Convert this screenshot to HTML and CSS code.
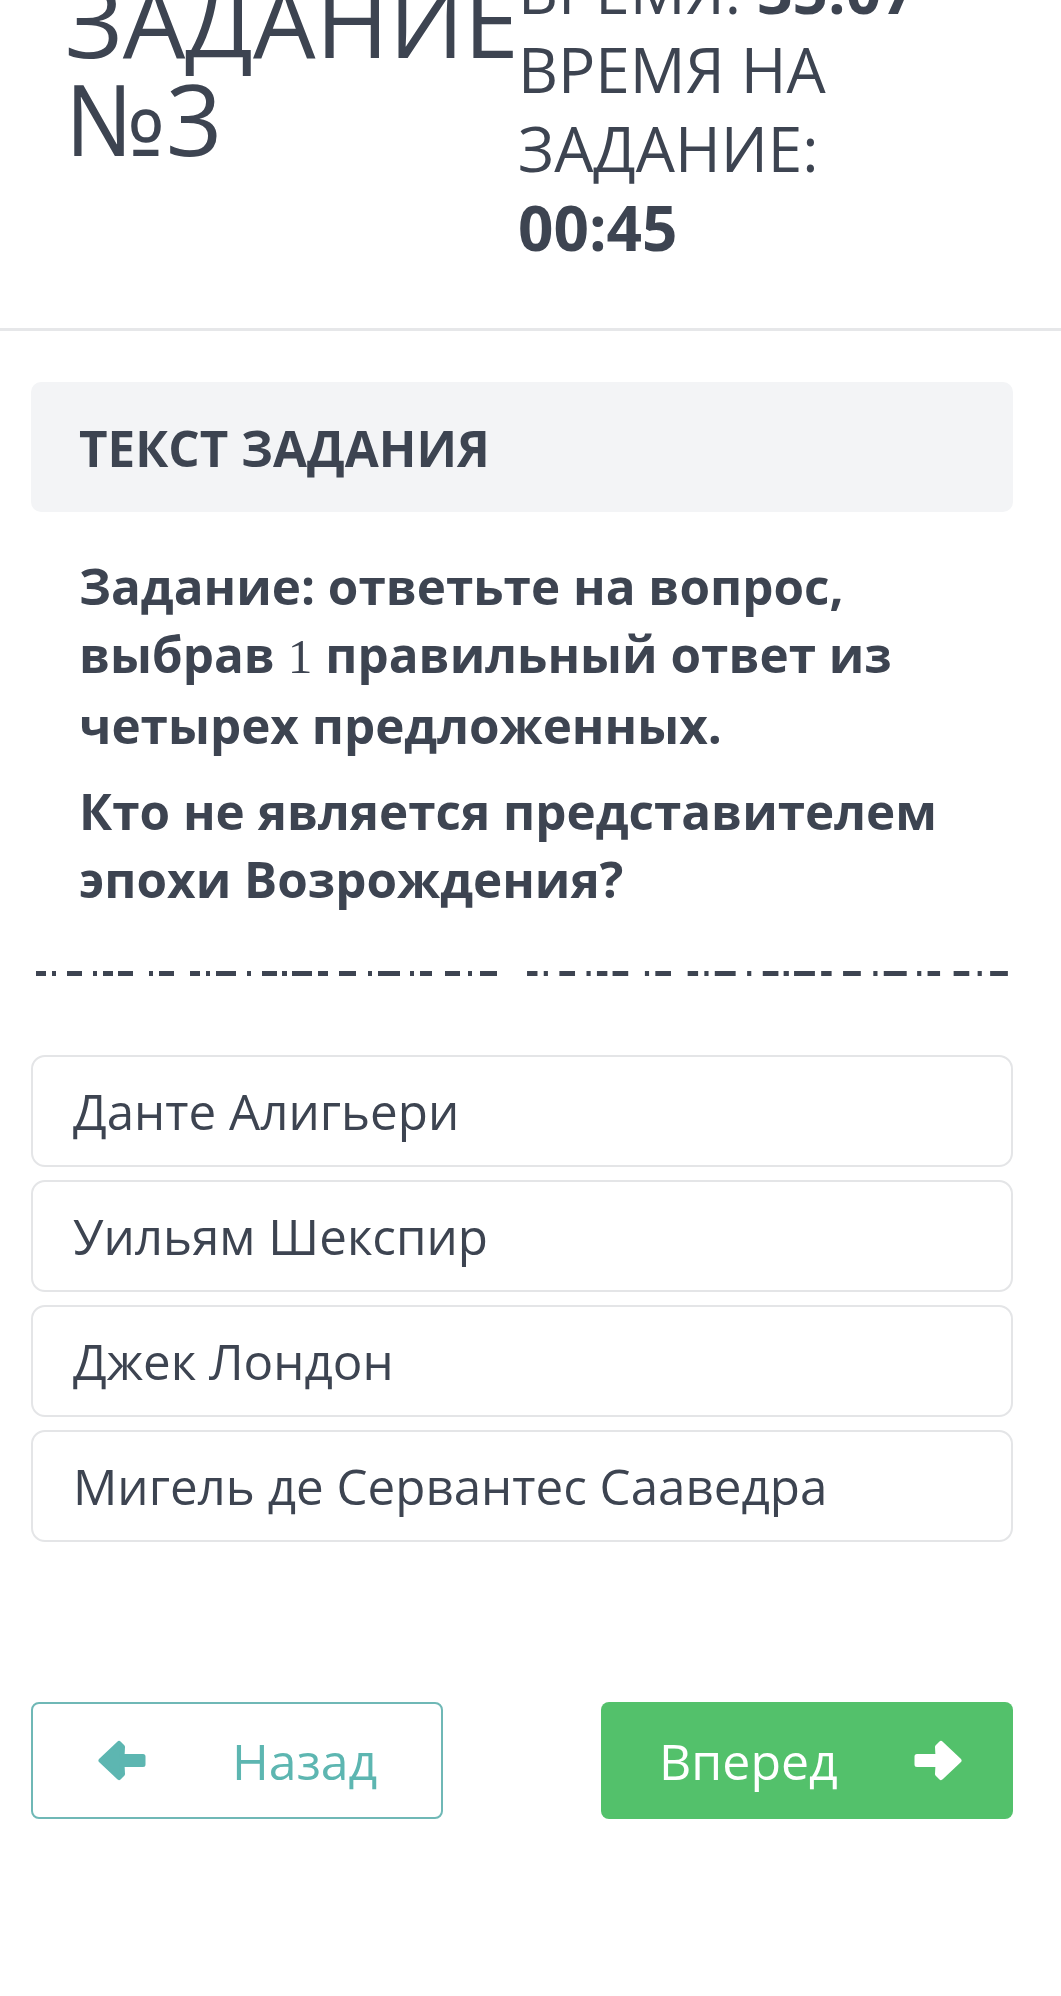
FILE: index.html
```html
<!DOCTYPE html>
<html lang="ru">
<head>
<meta charset="utf-8">
<title>Задание №3</title>
<link rel="stylesheet" href="styles.css">
</head>
<body>
<div class="page">
  <header class="top">
    <h1 class="title">ЗАДАНИЕ №3</h1>
    <div class="timers">
      <div>ВРЕМЯ: <b>35:07</b></div>
      <div>ВРЕМЯ НА ЗАДАНИЕ: <b>00:45</b></div>
    </div>
  </header>
  <main class="content">
    <div class="section-head">ТЕКСТ ЗАДАНИЯ</div>
    <div class="question">
      <p>Задание: ответьте на вопрос, выбрав <span class="num">1</span> правильный ответ из четырех предложенных.</p>
      <p>Кто не является представителем эпохи Возрождения?</p>
    </div>
    <svg class="dashes" viewBox="0 0 973 5" width="973" height="5" aria-hidden="true">
      <g fill="#3d4451">
        <rect x="1" y="0" width="10" height="5"/><rect x="17" y="0" width="4" height="5"/><rect x="32" y="0" width="15" height="5"/><rect x="58" y="0" width="4" height="5"/><rect x="68" y="0" width="10" height="5"/><rect x="83" y="0" width="15" height="5"/><rect x="114" y="0" width="4" height="5"/><rect x="124" y="0" width="15" height="5"/><rect x="155" y="0" width="10" height="5"/><rect x="171" y="0" width="4" height="5"/><rect x="181" y="0" width="20" height="5"/><rect x="212" y="0" width="4" height="5"/><rect x="227" y="0" width="15" height="5"/><rect x="247" y="0" width="5" height="5"/><rect x="257" y="0" width="20" height="5"/><rect x="283" y="0" width="10" height="5"/><rect x="304" y="0" width="17" height="5"/><rect x="333" y="0" width="4" height="5"/><rect x="343" y="0" width="22" height="5"/><rect x="375" y="0" width="4" height="5"/><rect x="385" y="0" width="12" height="5"/><rect x="410" y="0" width="15" height="5"/><rect x="433" y="0" width="4" height="5"/><rect x="445" y="0" width="17" height="5"/>
      </g>
      <g fill="#3d4451" transform="translate(491 0) scale(1.043 1)">
        <rect x="1" y="0" width="10" height="5"/><rect x="17" y="0" width="4" height="5"/><rect x="32" y="0" width="15" height="5"/><rect x="58" y="0" width="4" height="5"/><rect x="68" y="0" width="10" height="5"/><rect x="83" y="0" width="15" height="5"/><rect x="114" y="0" width="4" height="5"/><rect x="124" y="0" width="15" height="5"/><rect x="155" y="0" width="10" height="5"/><rect x="171" y="0" width="4" height="5"/><rect x="181" y="0" width="20" height="5"/><rect x="212" y="0" width="4" height="5"/><rect x="227" y="0" width="15" height="5"/><rect x="247" y="0" width="5" height="5"/><rect x="257" y="0" width="20" height="5"/><rect x="283" y="0" width="10" height="5"/><rect x="304" y="0" width="17" height="5"/><rect x="333" y="0" width="4" height="5"/><rect x="343" y="0" width="22" height="5"/><rect x="375" y="0" width="4" height="5"/><rect x="385" y="0" width="12" height="5"/><rect x="410" y="0" width="15" height="5"/><rect x="433" y="0" width="4" height="5"/><rect x="445" y="0" width="17" height="5"/>
      </g>
    </svg>
    <ul class="options">
      <li class="option">Данте Алигьери</li>
      <li class="option">Уильям Шекспир</li>
      <li class="option">Джек Лондон</li>
      <li class="option">Мигель де Сервантес Сааведра</li>
    </ul>
    <div class="nav">
      <button class="btn back" type="button">
        <svg class="arrow" viewBox="0 0 48 41" aria-hidden="true"><path d="M3 20.5 L21 3.5 L24.5 7 L24 16.5 L45 16.5 L45 24.5 L24 24.5 L24.5 34 L21 37.5 Z"/></svg>
        <span>Назад</span>
      </button>
      <button class="btn next" type="button">
        <span>Вперед</span>
        <svg class="arrow arrow-right" viewBox="0 0 48 41" aria-hidden="true"><path d="M3 20.5 L21 3.5 L24.5 7 L24 16.5 L45 16.5 L45 24.5 L24 24.5 L24.5 34 L21 37.5 Z"/></svg>
      </button>
    </div>
  </main>
</div>
</body>
</html>
```

FILE: styles.css
```css
html, body {
  margin: 0;
  padding: 0;
  background: #ffffff;
}

body {
  font-family: "Open Sans", "Noto Sans", sans-serif;
  color: #3d4451;
  overflow: hidden;
}

.page {
  width: 1061px;
}

.top {
  display: flex;
  align-items: flex-start;
  margin-top: -49px;
  padding: 0 0 61px 65px;
  border-bottom: 3px solid #e6e7e9;
}

.title {
  margin: 0;
  padding-top: 20px;
  width: 453px;
  flex: none;
  font-size: 99px;
  line-height: 98px;
  font-weight: 400;
}

.timers {
  width: 440px;
  font-size: 62px;
  line-height: 79px;
  font-weight: 400;
}

.timers b {
  font-weight: 700;
}

.content {
  padding: 0 48px 0 31px;
}

.section-head {
  margin-top: 51px;
  height: 130px;
  box-sizing: border-box;
  padding: 0 48px;
  display: flex;
  align-items: center;
  background: #f3f4f6;
  border-radius: 10px;
  font-size: 49.3px;
  font-weight: 700;
}

.question {
  margin-top: 40px;
  padding: 0 48px;
  font-size: 49.4px;
  line-height: 68px;
  font-weight: 700;
}

.question p {
  margin: 0;
}

.question p + p {
  margin-top: 18px;
}

.num {
  font-family: "Liberation Serif", "DejaVu Serif", serif;
  font-weight: 400;
}

.dashes {
  display: block;
  margin: 58px 0 0 4px;
}

.options {
  list-style: none;
  margin: 79px 0 0;
  padding: 0;
  display: flex;
  flex-direction: column;
  gap: 13px;
}

.option {
  border: 2px solid #e4e5e7;
  border-radius: 14px;
  padding: 24px 40px;
  font-size: 49.3px;
  line-height: 60px;
}

.nav {
  margin-top: 160px;
  display: flex;
  justify-content: space-between;
}

.btn {
  width: 412px;
  height: 117px;
  box-sizing: border-box;
  display: flex;
  align-items: center;
  border-radius: 8px;
  font-family: "Open Sans", "Noto Sans", sans-serif;
  font-size: 50px;
  line-height: 60px;
  cursor: pointer;
  margin: 0;
}

.arrow {
  width: 48px;
  height: 41px;
  flex: none;
  fill: currentColor;
  stroke: currentColor;
  stroke-width: 5;
  stroke-linejoin: round;
}

.arrow-right {
  transform: scaleX(-1);
}

.back {
  background: #ffffff;
  border: 2px solid #6fb8b6;
  color: #5db6b1;
  padding: 0 0 0 65px;
  gap: 86px;
}

.next {
  background: #53c16b;
  border: none;
  color: #ffffff;
  padding: 0 0 0 58px;
  gap: 76px;
}
```
